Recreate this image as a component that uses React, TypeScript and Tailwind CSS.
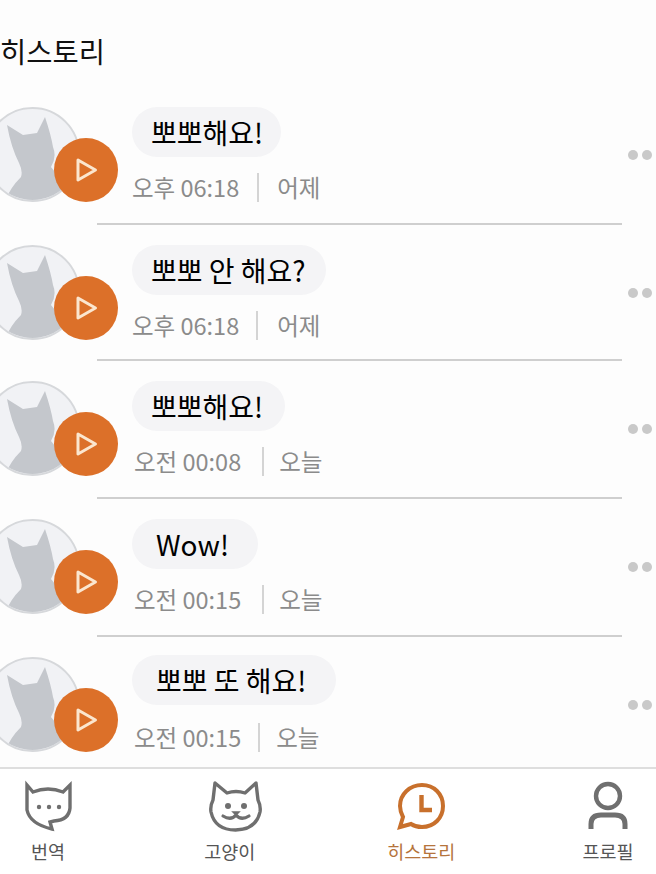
const font = "font-['Noto_Sans_CJK_KR','Noto_Sans',sans-serif]";

const historyData = [
  { id: 1, text: "뽀뽀해요!", bubble: "pl-[19px] w-[149px]", time: "오후 06:18", day: "어제", meta: "mt-[13px] ml-0", sep: "ml-[18px]", dayGap: "ml-[18px]", row: "h-[116px]" },
  { id: 2, text: "뽀뽀 안 해요?", bubble: "pl-[19px] w-[194px]", time: "오후 06:18", day: "어제", meta: "mt-[13px] ml-0", sep: "ml-[17px]", dayGap: "ml-[19px]", row: "h-[114px]" },
  { id: 3, text: "뽀뽀해요!", bubble: "pl-[19px] w-[153px]", time: "오전 00:08", day: "오늘", meta: "mt-[13px] ml-[2px]", sep: "ml-[21px]", dayGap: "ml-[15px]", row: "h-[116px]" },
  { id: 4, text: "Wow!", bubble: "pl-[24px] w-[126px]", time: "오전 00:15", day: "오늘", meta: "mt-[13px] ml-[2px]", sep: "ml-[21px]", dayGap: "ml-[15px]", row: "h-[116px]" },
  { id: 5, text: "뽀뽀 또 해요!", bubble: "pl-[24px] w-[204px] -mt-[2px]", time: "오전 00:15", day: "오늘", meta: "mt-[15px] ml-[2px]", sep: "ml-[17px]", dayGap: "ml-[16px]", row: "h-[110px]" },
];

const CatSilhouette = () => (
  <svg viewBox="0 0 95 95" className="absolute inset-0 w-full h-full">
    <path
      d="M22 18 L38 28 L52 26 L60 10 Q66 28 68 40 Q72 50 66 60 L70 65 Q82 78 84 95 L20 95 Q24 82 36 70 Q38 64 34 56 Q26 40 22 18 Z"
      fill="#c4c7cc"
    />
  </svg>
);

const HistoryRow = ({ item }: { item: (typeof historyData)[number] }) => (
  <div className={item.id !== 5 ? "mb-[20px]" : ""}>
    <div className={`flex items-start ${item.row}`}>
      <div className="relative w-[95px] h-[95px] -ml-[15px] shrink-0 rounded-full bg-[#f1f2f5] border-2 border-[#d6d8db] overflow-hidden">
        <div className="absolute -inset-[2px]">
          <CatSilhouette />
        </div>
      </div>
      <div className="relative w-0 h-[95px]">
        <button className="absolute left-[-26px] top-[31px] w-[64px] h-[64px] rounded-full bg-[#dc7029] flex items-center justify-center">
          <svg width="24" height="28" viewBox="0 0 24 28" fill="none" className="ml-[2px]">
            <path d="M3 4 L20.5 14 L3 24 Z" stroke="#fbe6cf" strokeWidth="3" strokeLinejoin="round" />
          </svg>
        </button>
      </div>
      <div className="ml-[52px] flex-1">
        <div className={`h-[50px] rounded-[25px] bg-[#f4f4f6] flex items-center text-[28px] text-black whitespace-nowrap ${item.bubble}`}>
          {item.text}
        </div>
        <div className={`flex items-center text-[23.5px] text-[#8b8b8b] ${item.meta}`}>
          <span className="whitespace-nowrap">{item.time}</span>
          <span className={`w-[2px] h-[29px] bg-[#d4d4d4] shrink-0 ${item.sep}`} />
          <span className={`whitespace-nowrap ${item.dayGap}`}>{item.day}</span>
        </div>
      </div>
      <div className="h-[95px] flex items-center gap-[4px] pr-[4px] shrink-0">
        <span className="w-[10px] h-[10px] rounded-full bg-[#c9c9c9]" />
        <span className="w-[10px] h-[10px] rounded-full bg-[#c9c9c9]" />
      </div>
    </div>
    {item.id !== 5 && <div className="ml-[97px] mr-[34px] h-[2px] bg-[#cfcfcf]" />}
  </div>
);

const TranslateIcon = () => (
  <svg width="54" height="54" viewBox="0 0 54 54" fill="none">
    <path
      d="M6 5 L12 12 Q27 6 42 12 L49 5 V28 Q48 40 33 41 L29 42 L31 49 Q9 44 6 30 Z"
      stroke="#6f6f6f"
      strokeWidth="3.4"
    />
    <circle cx="18" cy="27" r="2.2" fill="#6f6f6f" />
    <circle cx="28" cy="27" r="2.2" fill="#6f6f6f" />
    <circle cx="38" cy="27" r="2.2" fill="#6f6f6f" />
  </svg>
);

const CatIcon = () => (
  <svg width="54" height="54" viewBox="0 0 54 54" fill="none">
    <path
      d="M7 3 L19 13 Q28 10 37 13 L48 3 L50 20 Q53 26 52 32 Q48 50 27.5 50 Q7 50 3 32 Q2 26 5 20 Z"
      stroke="#6f6f6f"
      strokeWidth="3.4"
      strokeLinejoin="round"
    />
    <circle cx="20" cy="26" r="3" fill="#6f6f6f" />
    <circle cx="36" cy="26" r="3" fill="#6f6f6f" />
    <path d="M15 36 Q23 41 28 35 Q33 41 41 36" stroke="#6f6f6f" strokeWidth="3.2" strokeLinecap="round" />
    <path d="M25 32 H31 L28 35 Z" fill="#6f6f6f" stroke="#6f6f6f" strokeWidth="1.5" />
  </svg>
);

const HistoryIcon = () => (
  <svg width="54" height="54" viewBox="0 0 54 54" fill="none">
    <path
      d="M28 5 C40 5 49 14 49 26 C49 38 40 47 28 47 C23 47 20 46 17 44 L6 47 L9 37 C7 33 6 30 6 26 C6 14 16 5 28 5 Z"
      stroke="#c8702c"
      strokeWidth="4"
    />
    <path d="M27.5 15 V30 H38" stroke="#c8702c" strokeWidth="4.4" />
  </svg>
);

const ProfileIcon = () => (
  <svg width="54" height="54" viewBox="0 0 54 54" fill="none">
    <circle cx="27" cy="16" r="12" stroke="#6f6f6f" strokeWidth="4.4" />
    <path d="M10 49 V44 Q10 35 20 35 H34 Q44 35 44 44 V49" stroke="#6f6f6f" strokeWidth="5" />
  </svg>
);

const tabs = [
  { id: 1, label: "번역", icon: <TranslateIcon />, color: "text-[#555]" },
  { id: 2, label: "고양이", icon: <CatIcon />, color: "text-[#555] -ml-[10px]" },
  { id: 3, label: "히스토리", icon: <HistoryIcon />, color: "text-[#b5743c]" },
  { id: 4, label: "프로필", icon: <ProfileIcon />, color: "text-[#555]" },
];

export default function App() {
  return (
    <div className={`w-[656px] h-[874px] bg-[#fdfdfd] overflow-hidden flex flex-col ${font}`}>
      <h1 className="h-[107px] shrink-0 pt-[29px] text-[28.5px] leading-[44px] text-[#111]">히스토리</h1>
      <div className="flex-1">
        {historyData.map((item) => (
          <HistoryRow key={item.id} item={item} />
        ))}
      </div>
      <nav className="h-[107px] shrink-0 border-t-2 border-[#dedede] bg-white flex justify-between pt-[11px]">
        {tabs.map((tab) => (
          <div key={tab.id} className="w-[96px] flex flex-col items-center">
            {tab.icon}
            <span className={`mt-[3px] text-[18.5px] leading-[28px] whitespace-nowrap ${tab.color}`}>{tab.label}</span>
          </div>
        ))}
      </nav>
    </div>
  );
}
